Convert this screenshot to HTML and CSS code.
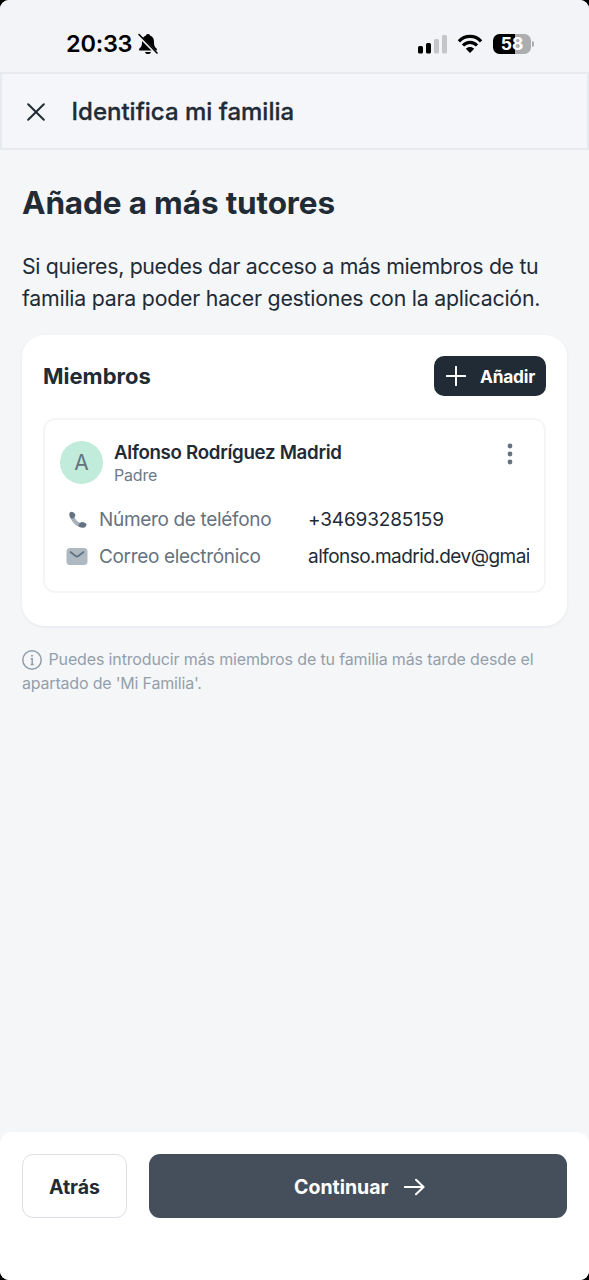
FILE: index.html
```
<!DOCTYPE html>
<html lang="es">
<head>
<meta charset="utf-8">
<title>Identifica mi familia</title>
<link rel="stylesheet" href="styles.css">
</head>
<body>
<div class="screen">
  <div class="status">
    <span class="time">20:33</span>
    <svg class="bell" width="20" height="22" viewBox="0 0 20 22">
      <path d="M10 1C8.6 1 8 1.8 8 2.5C5 3.4 4 6 4 9C4 13 3 14 1.5 15.5C.6 16.6 1 17.6 2.2 17.6H17.8C19 17.6 19.4 16.6 18.5 15.5C17 14 16 13 16 9C16 6 15 3.4 12 2.5C12 1.8 11.400 1 10 1Z"/>
      <path d="M7 19H13C12.600 20.500 11.500 21 10 21S7.400 20.500 7 19Z"/>
      <path class="bell-gap" d="M.5 2.500L18.500 20.500"/>
      <path class="bell-slash" d="M1 1.500L19 20"/>
    </svg>
    <div class="indicators">
      <svg width="30" height="20" viewBox="0 0 30 20">
        <rect x="0" y="12" width="5" height="7.500" rx="1.500"/>
        <rect x="8" y="9" width="5" height="10.500" rx="1.500"/>
        <rect class="dim" x="16" y="5" width="5" height="14.500" rx="1.500"/>
        <rect class="dim" x="24" y="1" width="5" height="18.500" rx="1.500"/>
      </svg>
      <svg width="26" height="20" viewBox="0 0 26 20">
        <path class="wave" d="M1.900 7.300C8 .8 18 .8 24.100 7.300M6 11.500C10 7.400 16 7.400 20 11.500"/>
        <path d="M8.800 14.700C11.200 12.500 14.800 12.500 17.200 14.700L13 19Z"/>
      </svg>
      <div class="battery"><span class="level">58</span><i class="tip"></i></div>
    </div>
  </div>

  <header class="topbar">
    <svg width="18" height="18" viewBox="0 0 18 18"><path d="M1.200 1.200L16.800 16.800M16.800 1.200L1.200 16.800"/></svg>
    <span class="topbar-title">Identifica mi familia</span>
  </header>

  <main class="content">
    <h1 class="title">Añade a más tutores</h1>
    <p class="intro"><span class="intro-a">Si quieres, puedes dar acceso a más miembros de tu</span><br><span class="intro-b">familia para poder hacer gestiones con la aplicación.</span></p>

    <section class="card">
      <div class="card-head">
        <h2 class="card-title">Miembros</h2>
        <button class="add">
          <svg width="20" height="20" viewBox="0 0 20 20"><path d="M10 .8V19.200M.8 10H19.200"/></svg>
          <span>Añadir</span>
        </button>
      </div>
      <article class="member">
        <div class="member-head">
          <div class="avatar">A</div>
          <div class="who">
            <div class="name">Alfonso Rodríguez Madrid</div>
            <div class="role">Padre</div>
          </div>
          <svg class="more" width="6" height="22" viewBox="0 0 6 22"><circle cx="3" cy="3" r="2.400"/><circle cx="3" cy="11" r="2.400"/><circle cx="3" cy="19" r="2.400"/></svg>
        </div>
        <div class="row">
          <svg class="row-icon" width="22" height="20" viewBox="0 0 22 20">
            <path class="soft" d="M4 6.500C5.500 11.500 9 15.500 14 17.200L15 13.300C11.800 12.300 9.300 9.800 8.300 6.600Z"/>
            <path class="strong" d="M3.300 4C3.500 2.500 5 1.500 6.400 1.900C8 2.400 9.800 4.200 9.300 5.700C9 6.700 8.100 7 7.900 7.900C6.500 8.800 5 8.700 4.300 7.800C3.700 6.600 3.200 5.400 3.300 4Z"/>
            <path class="strong" d="M13.300 13.600C14.300 13.200 14.600 12.200 15.700 12C17.300 11.800 20.200 12.900 20.500 14.300C20.700 16.200 19 17.700 17.300 17.800C15.800 17.900 14.300 17.600 13 16.800C12.300 15.700 12.500 14.400 13.300 13.600Z"/>
          </svg>
          <span class="label">Número de teléfono</span>
          <span class="value phone">+34693285159</span>
        </div>
        <div class="row">
          <svg class="row-icon" width="22" height="20" viewBox="0 0 22 20">
            <rect class="mail" x=".5" y="1" width="21" height="17" rx="3.500"/>
            <path class="flap" d="M4.500 5L9.600 9C10.500 9.700 11.500 9.700 12.400 9L17.500 5"/>
          </svg>
          <span class="label">Correo electrónico</span>
          <span class="value email">alfonso.madrid.dev@gmai</span>
        </div>
      </article>
    </section>

    <p class="note">
      <svg width="20" height="20" viewBox="0 0 20 20"><circle cx="10" cy="10" r="9.200"/><path d="M8.600 8.700H10.200V14.400M8.600 14.400H11.800"/><circle class="dot" cx="10" cy="5.800" r="1"/></svg>
      <span class="note-a">Puedes introducir más miembros de tu familia más tarde desde el</span><br><span class="note-b">apartado de 'Mi Familia'.</span>
    </p>
  </main>

  <footer class="footer">
    <button class="back">Atrás</button>
    <button class="next"><span>Continuar</span>
      <svg width="21" height="18" viewBox="0 0 21 18"><path d="M.8 9H19.600M12 1.700L19.600 9L12 16.300"/></svg>
    </button>
  </footer>
</div>
</body>
</html>
```
FILE: styles.css
```
* { box-sizing: border-box; }
body { margin: 0; background: #000; font-family: Inter, "Liberation Sans", sans-serif; color: #212b36; }
h1, h2, p { margin: 0; }
button { font-family: inherit; margin: 0; padding: 0; }
svg { display: block; flex: none; }
.screen { width: 589px; height: 1280px; display: flex; flex-direction: column; background: #f4f6f8; border-radius: 9px; overflow: hidden; white-space: nowrap; }

.status { height: 72px; flex: none; display: flex; align-items: center; padding: 15px 55px 0 66px; background: #f3f4f7; color: #000; }
.time { font-size: 23.500px; font-weight: 600; letter-spacing: -.25px; width: 71.500px; }
.bell-gap { stroke: #f3f4f7; stroke-width: 3; }
.bell-slash { stroke: #000; stroke-width: 1.600; stroke-linecap: round; }
.indicators { margin-left: auto; display: flex; align-items: center; gap: 9px; }
.dim { fill: #c4c5c8; }
.wave { fill: none; stroke: #000; stroke-width: 3.200; }
.battery { display: flex; align-items: center; gap: 1px; margin-left: 1px; }
.level { width: 38px; height: 20px; border-radius: 6.500px; background: linear-gradient(90deg, #000 58%, #acadaf 58%); color: #fff; font-size: 17.500px; line-height: 20px; font-weight: 700; text-align: center; }
.tip { width: 2px; height: 6px; border-radius: 0 2px 2px 0; background: #acadaf; }

.topbar { height: 78px; flex: none; display: flex; align-items: center; gap: 26.500px; padding: 1px 25px 0; border: 2px solid #e7ebf0; background: #f4f6f9; }
.topbar svg { stroke: #212b36; stroke-width: 2; stroke-linecap: round; }
.topbar-title { font-size: 24px; font-weight: 500; -webkit-text-stroke: .3px #212b36; }

.content { flex: 1; padding: 33px 22px 0; }
.title { font-size: 31.500px; line-height: 40px; font-weight: 700; letter-spacing: -.14px; }
.intro { margin-top: 27px; font-size: 21.300px; line-height: 32px; }
.intro-a { letter-spacing: -.32px; }
.intro-b { letter-spacing: -.225px; }
.card { margin-top: 21px; height: 291px; padding: 21px; border-radius: 22px; background: #fff; box-shadow: 0 1px 3px rgba(145,158,171,.14); }
.card-head { display: flex; align-items: center; justify-content: space-between; height: 40px; }
.card-title { font-size: 22px; font-weight: 700; }
.add { width: 112px; height: 40px; display: flex; align-items: center; gap: 14px; padding-left: 12px; border: 0; border-radius: 10px; background: #202b36; color: #fff; font-size: 17.300px; font-weight: 700; letter-spacing: -.2px; }
.add svg { stroke: #fff; stroke-width: 2; stroke-linecap: round; }
.member { margin-top: 22px; height: 175px; padding: 21px 15px 0 15px; border: 2px solid #f4f5f7; border-radius: 12px; overflow: hidden; }
.member-head { display: flex; height: 44px; }
.avatar { width: 43px; height: 43px; margin: 0 11px 0 0; border-radius: 50%; background: #c1ebdb; color: #647280; font-size: 21px; line-height: 43px; text-align: center; }
.name { font-size: 18.700px; line-height: 23px; font-weight: 600; letter-spacing: -.3px; }
.role { font-size: 16px; line-height: 22px; letter-spacing: -.2px; color: #6d7986; }
.more { margin: 2px 16px 0 auto; fill: #637381; }
.row { display: flex; align-items: center; height: 37px; }
.member-head + .row { margin-top: 16px; }
.row-icon { margin-left: 6px; }
.soft { fill: #a9b2ba; }
.strong { fill: #637381; }
.mail { fill: #afb9c2; }
.flap { fill: none; stroke: #637381; stroke-width: 1.700; stroke-linecap: round; }
.label { width: 209px; margin-left: 11px; flex: none; font-size: 19px; letter-spacing: -.33px; color: #66727f; }
.value { flex: 1; min-width: 0; overflow: hidden; font-size: 19px; }
.phone { letter-spacing: -.15px; }
.email { letter-spacing: -.54px; }

.note { margin-top: 21px; font-size: 16px; line-height: 24px; color: #949fab; }
.note svg { display: inline-block; vertical-align: -5px; margin-right: 2px; fill: none; stroke: #919eab; stroke-width: 1.500; }
.note .dot { fill: #919eab; stroke: none; }
.note-a { letter-spacing: -.14px; }
.note-b { letter-spacing: -.19px; }

.footer { height: 148px; flex: none; display: flex; align-items: flex-start; gap: 21.500px; padding: 22px 22px 0; border-radius: 12px 12px 0 0; background: #fff; }
.back { width: 105px; height: 64px; border: 1px solid #dcdfe4; border-radius: 11px; background: #fff; color: #212b36; font-size: 19.500px; font-weight: 700; padding-top: 1px; }
.next { flex: 1; height: 64px; display: flex; align-items: center; justify-content: center; gap: 15px; padding: 1px 0 0 3px; border: 0; border-radius: 11px; background: #454f5b; color: #fff; font-size: 19.500px; font-weight: 700; }
.next svg { fill: none; stroke: #fff; stroke-width: 2; stroke-linecap: round; stroke-linejoin: round; }
```
